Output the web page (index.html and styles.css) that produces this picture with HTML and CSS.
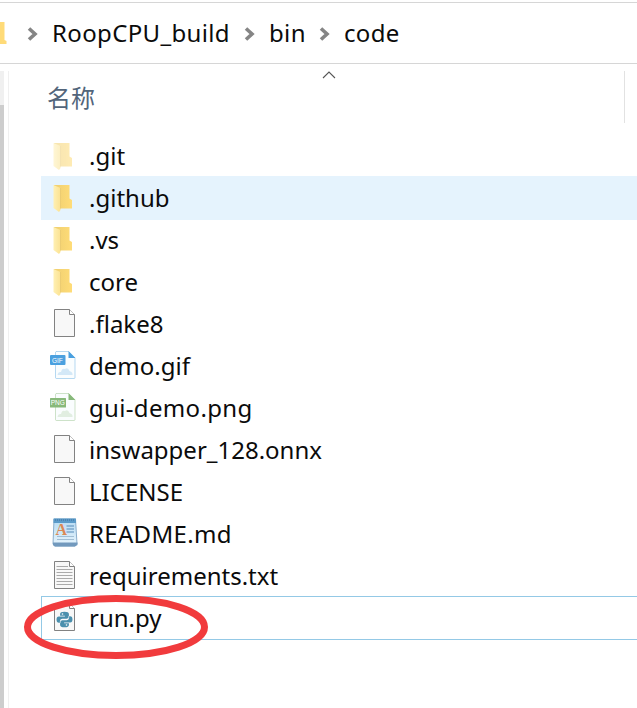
FILE: index.html
```html
<!DOCTYPE html>
<html lang="zh-CN">
<head>
<meta charset="utf-8">
<title>code</title>
<link rel="stylesheet" href="styles.css">
</head>
<body>
<svg class="defs" aria-hidden="true">
  <defs>
    <linearGradient id="fold" x1="0" x2="1"><stop offset="0" stop-color="#fff0b3"/><stop offset="1" stop-color="#fbe292"/></linearGradient>
    <linearGradient id="back" x1="0" x2="1"><stop offset="0" stop-color="#efcf70"/><stop offset="1" stop-color="#ffdc78"/></linearGradient>
    <linearGradient id="note" x2="0" y2="1"><stop offset="0" stop-color="#b5daf3"/><stop offset="1" stop-color="#e8f5fd"/></linearGradient>
    <symbol id="folder" viewBox="0 0 34 42">
      <path d="M6 9H21.500V22.500L24 24V32.500H11L6 31Z" fill="url(#back)"/>
      <path d="M5.500 9L12.500 12V34L11 36L5.500 32Z" fill="url(#fold)"/>
      <path d="M12.500 12V32.500" stroke="#e6c56c" stroke-width=".7"/>
    </symbol>
    <symbol id="page" viewBox="0 0 34 42">
      <path d="M6.500 7.500H21.500L26.500 12.500V34.500H6.500Z" fill="#f8f8f8" stroke="#828282"/>
      <path d="M21.500 7.500V12.500H26.500" fill="#fff" stroke="#828282"/>
    </symbol>
    <symbol id="image" viewBox="0 0 34 42">
      <path d="M8 7.500H20.500L27 14V33.500Q27 34.500 26 34.500H8.500Q7.500 34.500 7.500 33.500V8Z" fill="#fafdfe" stroke="currentColor" stroke-opacity=".4"/>
      <path d="M20.500 7V14H27.500Z" fill="currentColor"/>
      <path d="M9.500 31Q10 27.500 13 28Q14 23.500 17 25Q20 23 21.500 27Q25 28 24.500 31Z" fill="currentColor" opacity=".22"/>
    </symbol>
  </defs>
</svg>
<nav class="address">
  <svg class="address-folder" viewBox="0 0 7 24"><path d="M0 1H4.500V19L6.500 20V23H0Z" fill="#ffdb78"/></svg>
  <svg class="chevron" viewBox="0 0 12 16"><path d="M2 2.500L8 8L2 13.500"/></svg>
  <span class="crumb build">RoopCPU_build</span>
  <svg class="chevron" viewBox="0 0 12 16"><path d="M2 2.500L8 8L2 13.500"/></svg>
  <span class="crumb bin">bin</span>
  <svg class="chevron" viewBox="0 0 12 16"><path d="M2 2.500L8 8L2 13.500"/></svg>
  <span class="crumb">code</span>
</nav>
<div class="explorer">
  <div class="scrollbar"><div class="thumb"></div></div>
  <main class="pane">
    <header class="columns"><span class="column-name">名称</span>
      <svg class="sort" viewBox="0 0 14 8"><path d="M1 7L7 1L13 7"/></svg>
    </header>
    <ul class="files">
      <li class="file hidden-folder"><svg class="icon"><use href="#folder"/></svg><span>.git</span></li>
      <li class="file hovered"><svg class="icon"><use href="#folder"/></svg><span>.github</span></li>
      <li class="file"><svg class="icon"><use href="#folder"/></svg><span>.vs</span></li>
      <li class="file"><svg class="icon"><use href="#folder"/></svg><span>core</span></li>
      <li class="file"><svg class="icon"><use href="#page"/></svg><span>.flake8</span></li>
      <li class="file"><svg class="icon gif" viewBox="0 0 34 42"><use href="#image"/><rect x="2" y="11" width="15.500" height="10" rx="1" fill="currentColor"/><text x="4" y="18.500" class="badge">GIF</text></svg><span>demo.gif</span></li>
      <li class="file wide"><svg class="icon png" viewBox="0 0 34 42"><use href="#image"/><rect x="2" y="12" width="16" height="9.500" rx=".5" fill="currentColor"/><text x="2.700" y="19.300" class="badge">PNG</text></svg><span>gui-demo.png</span></li>
      <li class="file"><svg class="icon"><use href="#page"/></svg><span>inswapper_128.onnx</span></li>
      <li class="file"><svg class="icon"><use href="#page"/></svg><span>LICENSE</span></li>
      <li class="file wide"><svg class="icon" viewBox="0 0 34 42">
        <path d="M6 7H27.500L29 32L27 34H6.500L5 32Z" fill="url(#note)" stroke="#8baecc"/>
        <path d="M5.500 6.500H28V11H5.500Z" fill="#5b9bc9"/><path d="M7 8H27" stroke="#3f6f9d" stroke-dasharray="1 1"/>
        <path d="M18.500 14H26M18.500 17H26M18.500 20H26" stroke="#5789b8" stroke-width="1.200"/><path d="M9 24.500H26M9 27.500H26" stroke="#a2bed4"/>
        <path d="M5 30.500H29.500V33L27 34.500H7L5 33Z" fill="#7299bd"/><text x="7.500" y="23" class="letter">A</text>
      </svg><span>README.md</span></li>
      <li class="file"><svg class="icon" viewBox="0 0 34 42"><use href="#page"/><path d="M8.500 12.500H20M8.500 15.500H24.500M8.500 18.500H24.500M8.500 21.500H24.500M8.500 24.500H24.500M8.500 27.500H24.500M8.500 30.500H24.500" stroke="#aaa"/></svg><span>requirements.txt</span></li>
      <li class="file focused"><svg class="icon" viewBox="0 0 34 42"><use href="#page"/>
        <g fill="#4a8fad" transform="translate(16.500 23.500) scale(1.050 1) translate(-16.600 -23.700)"><path id="snake" d="M16.500 16Q12.400 16 12.400 18.300V20H17V20.800H11.200Q9 20.800 9 23.700Q9 27 11.300 27H12.500V25Q12.500 23 14.600 23H18.600Q20.800 23 20.800 21V18.300Q20.800 16 16.500 16Z"/><use href="#snake" transform="rotate(180 16.600 23.700)"/></g>
        <circle cx="14.500" cy="18" r=".8" fill="#fff"/><circle cx="18.500" cy="29" r=".8" fill="#fff"/><path d="M12.300 26.900V25.300Q12.300 23.500 14.500 23.500H18.500Q20.700 23.500 20.700 21.500V20" fill="none" stroke="#fff" stroke-width=".5"/>
      </svg><span>run.py</span></li>
    </ul>
  </main>
</div>
<svg class="marker" viewBox="0 0 186 66"><ellipse cx="93" cy="33" rx="88.500" ry="28.500"/></svg>
</body>
</html>
```
FILE: styles.css
```css
* { box-sizing: border-box; }
body {
  margin: 0;
  height: 708px;
  padding-top: 2px;
  overflow: hidden;
  position: relative;
  background: #fff;
  color: #0b0b0b;
  font: 24px/42px "Noto Sans", "Noto Sans CJK SC", sans-serif;
}
svg { display: block; flex: none; }
.defs { position: absolute; width: 0; height: 0; }
.address {
  display: flex;
  align-items: center;
  height: 62px;
  border-top: 1px solid #d6d6d6;
  border-bottom: 1px solid #d6d6d6;
}
.address-folder { width: 7px; height: 24px; margin-right: 20px; }
.chevron { width: 12px; height: 16px; margin-top: 2px; fill: none; stroke: #858585; stroke-width: 3.6; }
.crumb { white-space: nowrap; margin: 0 14px 0 13px; letter-spacing: .35px; }
.build { width: 178px; }
.bin { width: 36px; }
.explorer { display: flex; height: 644px; }
.scrollbar { width: 9px; margin-top: 7px; background: linear-gradient(90deg, #f0f0f0 4px, #fff 4px, #fff 8px, #f0f0f0 8px); }
.thumb { width: 4px; height: 603px; margin-top: 34px; background: #cdcdcd; }
.pane { flex: 1; padding-left: 32px; }
.columns {
  position: relative;
  width: 584px;
  height: 52px;
  margin-top: 7px;
  padding: 5px 0 0 6px;
  border-right: 1px solid #e2e2e2;
  color: #52657b;
  line-height: 42px;
}
.column-name { font-family: "Noto Sans CJK SC", sans-serif; font-weight: 400; }
.sort { position: absolute; left: 281px; top: 0; width: 14px; height: 8px; fill: none; stroke: #555; stroke-width: 1.1; }
.files { list-style: none; margin: 11px 0 0; padding: 0; }
.file { display: flex; height: 42px; padding-left: 7px; white-space: nowrap; }
.file span { margin-left: 7px; padding-top: 1px; }
.wide span { letter-spacing: .33px; }
.icon { width: 34px; height: 42px; }
.hidden-folder .icon { opacity: .55; }
.hovered { height: 44px; margin-bottom: -2px; background: #e5f3fd; }
.focused { height: 44px; box-shadow: inset 1px 1px #94c9e6, inset 0 -1px #94c9e6; }
.gif { color: #4aa0df; }
.png { color: #88b97b; }
.badge { font: 6.5px/1 "Liberation Sans", sans-serif; fill: #fff; }
.letter { font: bold 16px/1 "Liberation Serif", serif; fill: #db8954; }
.marker { position: absolute; left: 23px; top: 594px; width: 186px; height: 66px; fill: none; stroke: #f13b3d; stroke-width: 7; }
```
